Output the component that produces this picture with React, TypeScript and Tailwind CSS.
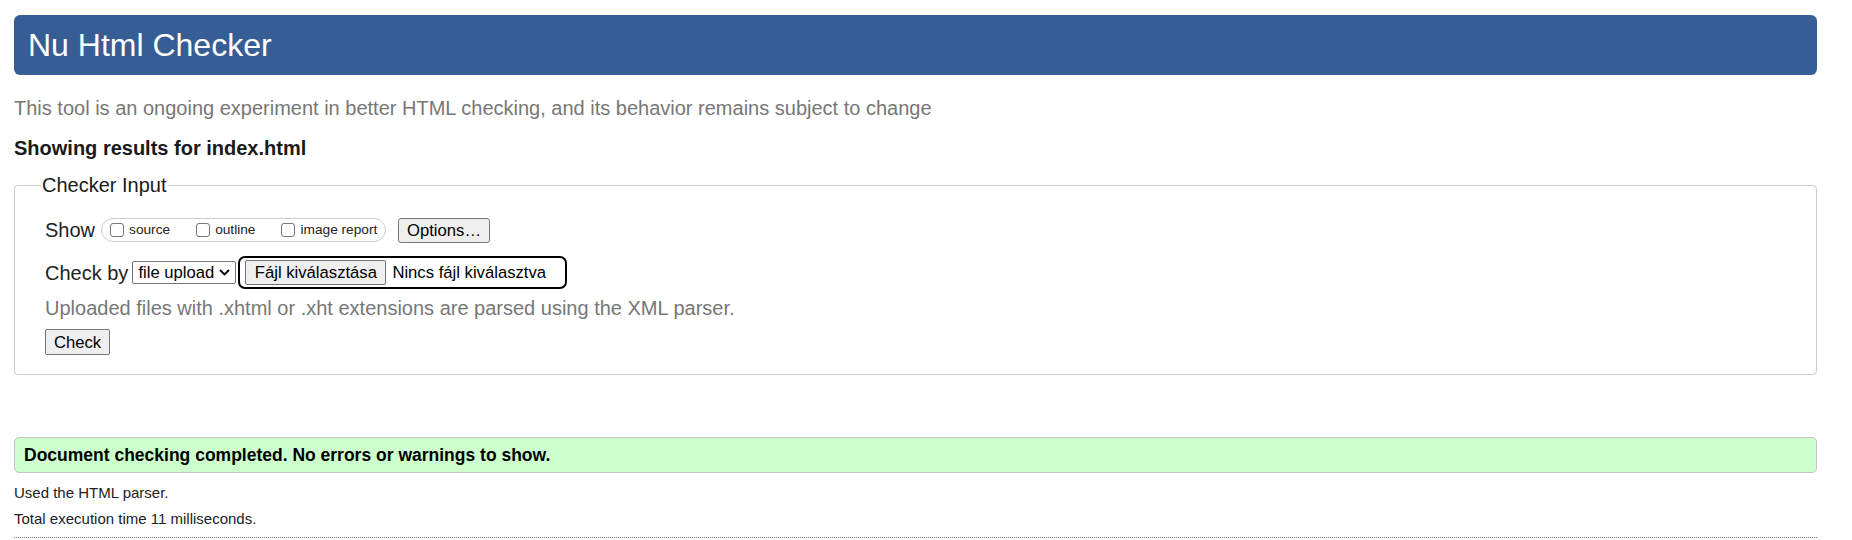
import React from "react";

function Box({ label }: { label: string }) {
  return (
    <span className="flex items-center">
      <span className="w-[14px] h-[14px] border border-[#767676] rounded-[3px] bg-white" />
      <span className="ml-[5px] text-[13.7px] leading-none">{label}</span>
    </span>
  );
}

export default function App() {
  return (
    <div className="w-[1852px] h-[540px] overflow-hidden bg-white text-[#222] font-['Liberation_Sans',Arial,sans-serif]">
      <div className="pl-[14px] pr-[35px] pt-[15px]">
        <header className="h-[60px] rounded-[6px] bg-[#375d95] flex items-center pl-[14px]">
          <h1 className="text-[32px] leading-none text-white font-normal">Nu Html Checker</h1>
        </header>
        <p className="mt-[20px] h-[26px] leading-[26px] text-[20px] text-[#777]">
          This tool is an ongoing experiment in better HTML checking, and its behavior remains subject to change
        </p>
        <p className="mt-[14px] h-[26px] leading-[26px] text-[20px] font-bold text-[#1a1a1a]">
          Showing results for index.html
        </p>
        <fieldset className="mt-[13px] border border-[#ccc] rounded-[4px] pb-[19px]">
          <legend className="ml-[26px] px-[1px] text-[20px] leading-[22px] text-[#1a1a1a]">Checker Input</legend>
          <div className="pl-[30px]">
            <div className="mt-[21px] h-[26px] flex items-center">
              <span className="text-[20px] leading-none">Show</span>
              <span className="ml-[6px] h-[24px] w-[285px] border border-[#ccc] rounded-[12px] flex items-center pl-[8px] gap-[26px]">
                <Box label="source" />
                <Box label="outline" />
                <Box label="image report" />
              </span>
              <span className="ml-[12px] h-[25px] w-[92px] border border-[#767676] rounded-[3px] bg-[#efefef] flex items-center justify-center text-[16.67px] text-black">
                Options…
              </span>
            </div>
            <div className="mt-[13px] h-[33px] flex items-center">
              <span className="text-[20px] leading-none">Check by</span>
              <span className="ml-[4px] h-[23px] w-[104px] border border-[#767676] rounded-[2px] bg-white flex items-center pl-[5px] pr-[5px] justify-between text-[16.67px] text-black">
                <span>file upload</span>
                <svg width="11" height="7" viewBox="0 0 11 7" fill="none">
                  <path d="M1 1l4.5 4.5L10 1" stroke="#000" strokeWidth="1.8" />
                </svg>
              </span>
              <span className="ml-[2px] h-[33px] w-[329px] border-2 border-black rounded-[7px] flex items-center pl-[5px]">
                <span className="h-[25px] w-[141px] border border-[#767676] rounded-[2px] bg-[#efefef] flex items-center justify-center text-[16.67px] text-black">
                  Fájl kiválasztása
                </span>
                <span className="ml-[6px] text-[16.67px] text-black">Nincs fájl kiválasztva</span>
              </span>
            </div>
            <p className="mt-[6px] h-[26px] leading-[26px] text-[20px] text-[#777]">
              Uploaded files with .xhtml or .xht extensions are parsed using the XML parser.
            </p>
            <div className="mt-[8px] flex">
              <span className="h-[26px] w-[65px] border border-[#767676] rounded-[2px] bg-[#efefef] flex items-center justify-center text-[16.67px] text-black">
                Check
              </span>
            </div>
          </div>
        </fieldset>
        <div className="mt-[62px] h-[36px] border border-[#c4c4c4] rounded-[5px] bg-[#ccffcc] flex items-center pl-[9px]">
          <span className="text-[17.5px] font-bold text-black">Document checking completed. No errors or warnings to show.</span>
        </div>
        <p className="mt-[10px] h-[20px] leading-[20px] text-[15px] text-[#222]">Used the HTML parser.</p>
        <p className="mt-[6px] h-[20px] leading-[20px] text-[15px] text-[#222]">Total execution time 11 milliseconds.</p>
        <div className="mt-[8px] border-t border-dotted border-[#777]" />
      </div>
    </div>
  );
}
